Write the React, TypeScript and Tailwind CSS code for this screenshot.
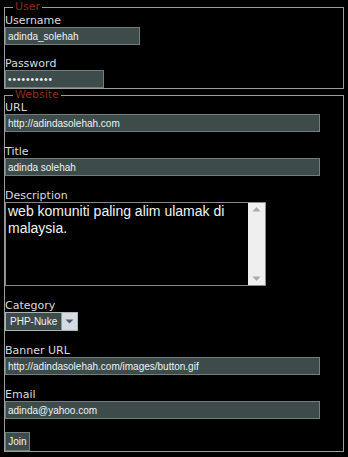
import React from 'react';

const label = "block text-[11px] leading-[13px] text-[#dcdcdc] [font-family:'DejaVu_Sans',Verdana,sans-serif]";
const field =
  "block h-[18px] border border-[#6f7f7f] bg-[#3d4b4b] px-[2px] text-[10px] leading-[16px] text-[#eef4f4] [font-family:'Liberation_Sans',Arial,sans-serif] outline-none";
const legend =
  "ml-[8px] px-[2px] text-[11px] text-[#8c2c1c] [font-family:'DejaVu_Sans',Verdana,sans-serif]";

function Row({ name, gap = 'mb-[13px]', children }: { name: string; gap?: string; children: React.ReactNode }) {
  return (
    <div className={gap}>
      <span className={label}>{name}</span>
      {children}
    </div>
  );
}

export default function App() {
  return (
    <div className="h-[457px] w-[348px] overflow-hidden bg-black">
      <form onSubmit={(e) => e.preventDefault()}>
        <fieldset className="ml-[4px] w-[340px] border border-[#9c9c9c]">
          <legend className={`${legend} leading-[14px]`}>User</legend>
          <Row name="Username" gap="mb-[12px]">
            <input className={`${field} w-[135px]`} defaultValue="adinda_solehah" />
          </Row>
          <div>
            <span className={label}>Password</span>
            <input
              type="password"
              className={`${field} h-[17px] w-[99px] tracking-[1px]`}
              defaultValue="1234567890"
            />
          </div>
        </fieldset>

        <fieldset className="ml-[4px] w-[340px] border border-[#9c9c9c]">
          <legend className={`${legend} leading-[12px]`}>Website</legend>
          <Row name="URL">
            <input className={`${field} w-[315px]`} defaultValue="http://adindasolehah.com" />
          </Row>
          <Row name="Title">
            <input className={`${field} w-[315px]`} defaultValue="adinda solehah" />
          </Row>
          <Row name="Description">
            <div className="flex h-[84px] w-[261px] border border-[#8a8a8a] bg-black">
              <textarea
                className="h-full flex-1 resize-none overflow-hidden bg-black px-[2px] py-0 text-[14px] leading-[17px] text-[#eef4f4] outline-none [font-family:'Liberation_Sans',Arial,sans-serif]"
                defaultValue="web komuniti paling alim ulamak di malaysia."
              />
              <div className="flex w-[17px] flex-col items-center justify-between bg-[#efefef] py-[3px]">
                <svg width="9" height="6" viewBox="0 0 9 6">
                  <path d="M0.5 5.5 L4.5 1 L8.5 5.5 Z" fill="#a9a9a9" />
                </svg>
                <svg width="9" height="6" viewBox="0 0 9 6">
                  <path d="M0.5 0.5 L4.5 5 L8.5 0.5 Z" fill="#a9a9a9" />
                </svg>
              </div>
            </div>
          </Row>
          <Row name="Category">
            <div className="flex h-[19px] w-[73px] border border-[#a9b4b4] bg-[#3d4b4b]">
              <span className="flex-1 whitespace-nowrap pl-[4px] text-[10px] leading-[17px] text-[#eef4f4] [font-family:'Liberation_Sans',Arial,sans-serif]">
                PHP-Nuke
              </span>
              <div className="flex w-[16px] shrink-0 items-center justify-center border-l border-[#8f9c9c] bg-[#d6dbe2]">
                <svg width="9" height="5" viewBox="0 0 9 5">
                  <path d="M0.5 0.5 L4.5 4.5 L8.5 0.5 Z" fill="#4a5a72" />
                </svg>
              </div>
            </div>
          </Row>
          <Row name="Banner URL">
            <input
              className={`${field} w-[315px]`}
              defaultValue="http://adindasolehah.com/images/button.gif"
            />
          </Row>
          <Row name="Email">
            <input className={`${field} w-[315px]`} defaultValue="adinda@yahoo.com" />
          </Row>
          <button
            type="submit"
            className="block h-[19px] w-[25px] border border-[#6f7f7f] bg-[#3d4b4b] text-[10px] leading-[17px] text-[#eef4f4] [font-family:'Liberation_Sans',Arial,sans-serif]"
          >
            Join
          </button>
        </fieldset>
      </form>
    </div>
  );
}
